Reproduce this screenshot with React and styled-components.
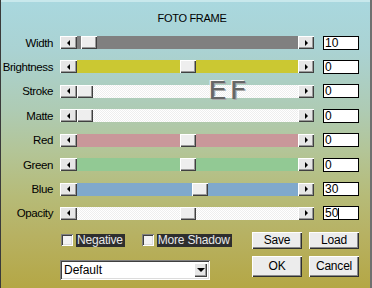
import React from 'react';
import styled, { createGlobalStyle } from 'styled-components';

const GlobalStyle = createGlobalStyle`
  html, body {
    margin: 0;
    padding: 0;
  }
  body {
    font-family: "Liberation Sans", Arial, sans-serif;
    font-size: 11px;
    color: #000;
  }
`;

const TRACK_WIDTH = 221;
const THUMB_WIDTH = 16;

const raised = `
  background: #e6e6e6;
  box-shadow: inset 1px 1px #ffffff, inset -1px -1px #404040, inset -2px -2px #9a9a9a;
`;

const Window = styled.div`
  position: relative;
  width: 372px;
  height: 288px;
  box-sizing: border-box;
  background: linear-gradient(
    to bottom,
    #a9d8df 0%,
    #aad2d2 18%,
    #aecbb4 38%,
    #b3c598 52%,
    #b6bb78 68%,
    #b7b162 82%,
    #b4a745 100%
  );
  box-shadow: inset 1px 0 #3a3a3a, inset -2px 0 #707070, inset 0 2px #c8e8ec;
  overflow: hidden;
`;

const Title = styled.div`
  padding: 12px 0 0 12px;
  height: 13px;
  line-height: 13px;
  text-align: center;
  letter-spacing: -0.3px;
`;

const Rows = styled.div`
  margin-top: 5.3px;
`;

const Row = styled.div`
  display: flex;
  align-items: center;
  height: 24.43px;
`;

const Label = styled.div`
  width: 53px;
  margin-right: 7px;
  text-align: right;
  font-size: 11.5px;
  letter-spacing: -0.4px;
  white-space: nowrap;
`;

const Slider = styled.div`
  display: flex;
  width: 254px;
  height: 13px;
`;

const ArrowButton = styled.div`
  ${raised}
  width: ${p => p.$w}px;
  height: 13px;
  display: flex;
  align-items: center;
  justify-content: center;

  &::after {
    content: '';
    width: 0;
    height: 0;
    border-top: 3px solid transparent;
    border-bottom: 3px solid transparent;
    ${p => (p.$dir === 'left'
      ? 'border-right: 3px solid #000; margin-left: -1px;'
      : 'border-left: 3px solid #000; margin-left: 1px;')}
  }
`;

const Track = styled.div`
  position: relative;
  flex: 1;
  background: ${p => (p.$color === 'white'
    ? 'repeating-conic-gradient(#ffffff 0 25%, #eeeeee 0 50%) 0 0 / 2px 2px'
    : p.$color)};
`;

const Thumb = styled.div`
  ${raised}
  position: absolute;
  top: 0;
  width: ${THUMB_WIDTH}px;
  height: 13px;
  background: #eeeeee;
`;

const ValueBox = styled.div`
  margin-left: 9px;
  width: 36px;
  height: 14px;
  box-sizing: border-box;
  border: 1px solid #000;
  background: #fff;
  display: flex;
  align-items: center;
  padding-left: 1px;
  font-size: 12px;
`;

const Caret = styled.span`
  display: inline-block;
  width: 1px;
  height: 11px;
  background: #000;
`;

const Logo = styled.div`
  position: absolute;
  left: 208px;
  top: 77px;
  font-family: "DejaVu Sans", sans-serif;
  font-size: 24px;
  letter-spacing: 2px;
  color: #666666;
  transform: scaleX(1.25);
  transform-origin: left top;
  text-shadow: -1px -1px 0 #f6f6f6, 1px 1px 0 #a8a8a8;
`;

const Bottom = styled.div`
  padding-left: 60px;
  margin-top: 6.3px;
`;

const BottomRow = styled.div`
  display: flex;
  align-items: ${p => (p.$top ? 'flex-start' : 'center')};
  height: ${p => p.$h}px;
  margin-top: ${p => p.$mt || 0}px;
`;

const LeftGroup = styled.div`
  display: flex;
  align-items: center;
  width: 192px;
`;

const CheckItem = styled.div`
  display: flex;
  align-items: center;
  margin-right: ${p => p.$mr || 0}px;
`;

const CheckBox = styled.div`
  width: 12px;
  height: 12px;
  margin-left: 1px;
  margin-right: 3px;
  background: #f2f2f2;
  box-shadow: inset 1px 1px #808080, inset -1px -1px #ffffff, inset 2px 2px #404040, inset -2px -2px #dcdcdc;
`;

const CheckLabel = styled.div`
  height: 13px;
  line-height: 13px;
  padding: 0 2px 0 1px;
  background: #2e2e2e;
  color: #e8e8e8;
  font-size: 12px;
  letter-spacing: -0.2px;
  white-space: nowrap;
`;

const Buttons = styled.div`
  display: flex;
  gap: 7px;
`;

const Button = styled.div`
  ${raised}
  background: #ececec;
  box-shadow: inset 1px 1px #ffffff, inset -1px -1px #303030, inset -2px -2px #8a8a8a;
  width: 50px;
  height: ${p => p.$h}px;
  display: flex;
  align-items: center;
  justify-content: center;
  font-size: 12px;
  letter-spacing: -0.2px;
`;

const Dropdown = styled.div`
  margin-top: 4px;
  width: 150px;
  height: 20px;
  box-sizing: border-box;
  background: #fff;
  box-shadow: inset 1px 1px #808080, inset -1px -1px #ffffff, inset 2px 2px #404040, inset -2px -2px #dcdcdc;
  display: flex;
  align-items: center;
  justify-content: space-between;
  padding: 0 3px 0 4px;
  font-size: 12px;
`;

const DropButton = styled.div`
  ${raised}
  width: 13px;
  height: 14px;
  display: flex;
  align-items: center;
  justify-content: center;

  &::after {
    content: '';
    border-left: 4px solid transparent;
    border-right: 4px solid transparent;
    border-top: 4px solid #000;
    margin-top: 1px;
  }
`;

const sliders = [
  { label: 'Width', value: 10, min: 0, max: 500, color: '#808080' },
  { label: 'Brightness', value: 0, min: -100, max: 100, color: '#cbc832' },
  { label: 'Stroke', value: 0, min: 0, max: 100, color: 'white' },
  { label: 'Matte', value: 0, min: 0, max: 100, color: 'white' },
  { label: 'Red', value: 0, min: -255, max: 255, color: '#c9979a' },
  { label: 'Green', value: 0, min: -255, max: 255, color: '#92c994' },
  { label: 'Blue', value: 30, min: -255, max: 255, color: '#80a9cc' },
  { label: 'Opacity', value: 50, min: 0, max: 100, color: 'white', focused: true },
];

const App = () => {
  return (
    <Window>
      <GlobalStyle />
      <Title>FOTO FRAME</Title>

      <Rows>
        {sliders.map(s => {
          const left = ((s.value - s.min) / (s.max - s.min)) * (TRACK_WIDTH - THUMB_WIDTH);
          return (
            <Row key={s.label}>
              <Label>{s.label}</Label>
              <Slider>
                <ArrowButton $dir="left" $w={17} />
                <Track $color={s.color}>
                  <Thumb style={{ left: `${left}px` }} />
                </Track>
                <ArrowButton $dir="right" $w={16} />
              </Slider>
              <ValueBox>
                {s.value}
                {s.focused && <Caret />}
              </ValueBox>
            </Row>
          );
        })}
      </Rows>

      <Logo>EF</Logo>

      <Bottom>
        <BottomRow $h={17}>
          <LeftGroup>
            <CheckItem $mr={16}>
              <CheckBox />
              <CheckLabel>Negative</CheckLabel>
            </CheckItem>
            <CheckItem>
              <CheckBox />
              <CheckLabel>More Shadow</CheckLabel>
            </CheckItem>
          </LeftGroup>
          <Buttons>
            <Button $h={17}>Save</Button>
            <Button $h={17}>Load</Button>
          </Buttons>
        </BottomRow>
        <BottomRow $h={21} $mt={7} $top>
          <LeftGroup>
            <Dropdown>
              Default
              <DropButton />
            </Dropdown>
          </LeftGroup>
          <Buttons>
            <Button $h={21}>OK</Button>
            <Button $h={21}>Cancel</Button>
          </Buttons>
        </BottomRow>
      </Bottom>
    </Window>
  );
};

export default App;
